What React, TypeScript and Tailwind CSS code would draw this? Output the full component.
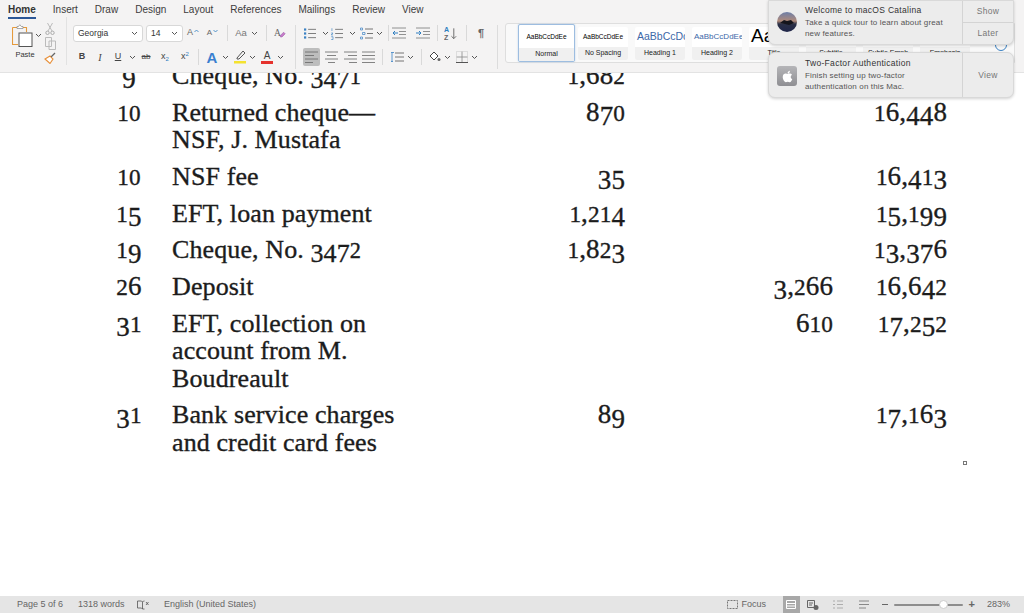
import React from "react";
import { FaApple } from "react-icons/fa";

const Chev = ({ c = "#555" }: { c?: string }) => (
  <svg width="7" height="5" viewBox="0 0 7 5"><path d="M1 1l2.5 2.5L6 1" fill="none" stroke={c} strokeWidth="1" /></svg>
);
const Caret = ({ up }: { up?: boolean }) => (
  <svg className="mb-[5px] ml-[1px]" width="5" height="4" viewBox="0 0 5 4"><path d={up ? "M.5 3L2.500 1l2 2" : "M.5 1l2 2 2-2"} fill="none" stroke="#2f7fc1" strokeWidth=".8" /></svg>
);
const Lines = ({ kind }: { kind: "l" | "c" | "r" | "j" }) => {
  const d = {
    l: "M0 1h13M0 4.5h9M0 8h13M0 11.5h8",
    c: "M0 1h13M2 4.5h9M0 8h13M3 11.5h7",
    r: "M0 1h13M4 4.5h9M0 8h13M5 11.5h8",
    j: "M0 1h13M0 4.5h13M0 8h13M0 11.5h13",
  }[kind];
  return <svg width="13" height="12" viewBox="0 0 13 12"><path d={d} fill="none" stroke="#666" strokeWidth="0.8" /></svg>;
};
const ListIcon = ({ kind }: { kind: "b" | "n" | "m" }) => (
  <svg width="13" height="13" viewBox="0 0 13 13">
    <path d={kind === "m" ? "M5 2h8M7 6.5h6M5 11h8" : "M4.5 2h8.5M4.5 6.5h8.5M4.5 11h8.5"} fill="none" stroke="#666" strokeWidth=".9" />
    {kind === "b" && <g fill="#3b82c4"><rect x="0" y="1" width="2.4" height="2.4" /><rect x="0" y="5.3" width="2.4" height="2.4" /><rect x="0" y="9.6" width="2.4" height="2.4" /></g>}
    {kind === "n" && <path d="M1 .8v3M.2 6h2l-2 2h2M.2 10h2v3h-2" fill="none" stroke="#3b82c4" strokeWidth=".7" />}
    {kind === "m" && <path d="M.5 1h2v2h-2zM2.500 5.500h2.500v2H2.500zM.5 10h2v2h-2z" fill="none" stroke="#3b82c4" strokeWidth=".7" />}
  </svg>
);
const Indent = ({ dir }: { dir: "l" | "r" }) => (
  <svg width="14" height="12" viewBox="0 0 14 12">
    <path d="M0 1h14M7 4.500h7M7 7.500h7M0 11h14" fill="none" stroke="#777" strokeWidth=".8" />
    <path d={dir === "l" ? "M6 6H1M3 4L1 6l2 2" : "M0 6h5M3 4l2 2-2 2"} fill="none" stroke="#2f7fc1" strokeWidth="1" />
  </svg>
);
const Sep = ({ h = "h-[16px]" }: { h?: string }) => <div className={`w-px bg-[#d9d9d9] ${h}`} />;

const Old = ({ s }: { s: string }) => (
  <>
    {s.split("").map((c, i) =>
      "012".includes(c) ? (
        <span key={i} className="text-[0.86em] leading-none">{c}</span>
      ) : "34579".includes(c) ? (
        <span key={i} className="relative top-[0.15em]">{c}</span>
      ) : (
        <span key={i}>{c}</span>
      )
    )}
  </>
);

const Doc = [
  { d: "9", t: ["Cheque, No. 3471"], a: "1,682", b: "", c: "" },
  { d: "10", t: ["Returned cheque—", "NSF, J. Mustafa"], a: "870", b: "", c: "16,448" },
  { d: "10", t: ["NSF fee"], a: "35", b: "", c: "16,413" },
  { d: "15", t: ["EFT, loan payment"], a: "1,214", b: "", c: "15,199" },
  { d: "19", t: ["Cheque, No. 3472"], a: "1,823", b: "", c: "13,376" },
  { d: "26", t: ["Deposit"], a: "", b: "3,266", c: "16,642" },
  { d: "31", t: ["EFT, collection on", "account from M.", "Boudreault"], a: "", b: "610", c: "17,252" },
  { d: "31", t: ["Bank service charges", "and credit card fees"], a: "89", b: "", c: "17,163" },
];

const StyleCard = ({ sample, label, cls, active }: { sample: string; label: string; cls: string; active?: boolean }) => (
  <div className={`flex shrink-0 flex-col overflow-hidden rounded-[2px] bg-white ${active ? "-mr-[4px] h-[38px] w-[57px] border border-[#9dbde0] shadow-[0_0_2px_#bcd2ea]" : "h-[33px] w-[50px]"}`}>
    <div className={`flex min-w-0 flex-1 items-center justify-center overflow-hidden whitespace-nowrap ${cls}`}>{sample}</div>
    <div className="flex h-[13px] shrink-0 items-center justify-center bg-[#f0f0f0] text-[7px] text-[#222]">{label}</div>
  </div>
);

export default function App() {
  return (
    <div className="relative flex h-[613px] w-[1024px] flex-col overflow-hidden bg-white font-['Liberation_Sans',sans-serif] text-[#3c3c3c]">
      {/* Ribbon */}
      <div className="relative z-10 h-[72px] shrink-0 bg-[#f4f3f3] shadow-[0_1px_0_#e3e3e3]">
        <div className="flex h-[20px] items-center gap-[17px] pl-[8px] text-[10px] leading-none">
          <div className="relative font-bold text-[#333]">Home<div className="absolute -bottom-[4px] left-0 h-[2px] w-full bg-[#2b5797]" /></div>
          <span>Insert</span><span>Draw</span><span>Design</span><span>Layout</span><span>References</span><span>Mailings</span><span>Review</span><span>View</span>
        </div>
        <div className="flex h-[52px]">
          {/* Clipboard */}
          <div className="flex w-[66px] shrink-0 pl-[12px]">
            <div className="flex w-[30px] flex-col">
              <div className="mt-[4px] flex items-center">
                <svg width="21" height="23" viewBox="0 0 21 23">
                  <path d="M.5 3.500h4.500M11 3.500h3.500V8M.5 3.500V20.500H6" fill="none" stroke="#e59a3c" strokeWidth="1.1" />
                  <path d="M5 4.500V2.500h1.500L7.800.7 9.300 2.500H11v2z" fill="#fff" stroke="#888" strokeWidth=".7" />
                  <rect x="7" y="9" width="13" height="13.500" fill="#fff" stroke="#555" strokeWidth="1" />
                </svg>
                <span className="ml-[2px]"><Chev /></span>
              </div>
              <div className="mt-[3px] w-[26px] text-center text-[7.500px] leading-[10px] text-[#333]">Paste</div>
            </div>
            <div className="flex w-[16px] flex-col items-center gap-[2px] pt-[3px]">
              <svg width="10" height="12" viewBox="0 0 10 12"><path d="M2.500 0L7 8M7.500 0L3 8" stroke="#bbb" fill="none" /><circle cx="2.500" cy="9.800" r="1.700" fill="none" stroke="#aaa" /><circle cx="7.500" cy="9.800" r="1.700" fill="none" stroke="#aaa" /></svg>
              <svg width="11" height="13" viewBox="0 0 11 13"><path d="M.500.500h6v9h-6zM4 4h6.500v8.500H4z" fill="none" stroke="#bbb" /></svg>
              <svg width="12" height="12" viewBox="0 0 12 12"><path d="M1 7l5-3 3 3-3 4.500z" fill="#fff" stroke="#e8903a" strokeWidth="1.100" /><path d="M7 5l4-4" stroke="#666" strokeWidth="1.300" /></svg>
            </div>
          </div>
          <div className="-mt-[3px] mb-[7px] w-px bg-[#e2e2e2]" />
          {/* Font etc. */}
          <div className="flex w-[438px] shrink-0 flex-col pl-[6px]">
            <div className="mt-[4px] flex h-[18px] items-center">
              <div className="flex h-[17px] w-[70px] items-center justify-between rounded-[3px] border border-[#d8d8d8] bg-white pl-[4px] pr-[4px] text-[8.500px] text-[#333]">Georgia<Chev /></div>
              <div className="ml-[3px] flex h-[17px] w-[37px] items-center justify-between rounded-[3px] border border-[#d8d8d8] bg-white pl-[4px] pr-[4px] text-[8.500px] text-[#333]">14<Chev /></div>
              <div className="flex w-[20px] items-center justify-center text-[9px] text-[#666]">A<Caret up /></div>
              <div className="flex w-[19px] items-center justify-center text-[8px] text-[#666]">A<Caret /></div>
              <div className="flex w-[10px] justify-center"><Sep /></div>
              <div className="w-[18px] text-center text-[9.500px] text-[#777]">Aa</div>
              <div className="flex w-[8px] justify-center"><Chev /></div>
              <div className="flex w-[16px] justify-center"><Sep /></div>
              <div className="flex w-[12px] justify-center">
                <svg width="15" height="14" viewBox="0 0 15 14"><text x="0" y="11" fontSize="12" fill="#666" fontFamily="Liberation Serif">A</text><path d="M8 10l4-4 2 2-4 4H8z" fill="#c77ac9" stroke="#8e4f9c" strokeWidth=".6" /></svg>
              </div>
              <div className="flex w-[18px] justify-center"><div className="h-[44px] w-px translate-y-[14px] bg-[#dcdcdc]" /></div>
              <div className="flex w-[12px] justify-center"><ListIcon kind="b" /></div>
              <div className="ml-[4px] flex w-[10px] justify-center"><Chev /></div>
              <div className="ml-[1px] flex w-[12px] justify-center"><ListIcon kind="n" /></div>
              <div className="ml-[4px] flex w-[10px] justify-center"><Chev /></div>
              <div className="ml-[2px] flex w-[14px] justify-center"><ListIcon kind="m" /></div>
              <div className="flex w-[12px] justify-center"><Chev /></div>
              <div className="flex w-[7px] justify-center"><Sep /></div>
              <div className="flex w-[14px] justify-center"><Indent dir="l" /></div>
              <div className="ml-[10px] flex w-[14px] justify-center"><Indent dir="r" /></div>
              <div className="flex w-[14px] justify-center"><Sep /></div>
              <div className="flex w-[14px] justify-center">
                <svg width="15" height="16" viewBox="0 0 15 16"><text x="0" y="7" fontSize="7.500" fill="#2f7fc1" fontWeight="bold">A</text><text x="0" y="15" fontSize="7.500" fill="#666" fontWeight="bold">Z</text><path d="M10.500 3v11M8 11.500l2.500 2.500 2.500-2.500" fill="none" stroke="#666" /></svg>
              </div>
              <div className="flex w-[16px] justify-center"><Sep /></div>
              <div className="w-[14px] text-center text-[11px] font-bold text-[#666]">¶</div>
              <div className="flex w-[10px] justify-end"><div className="h-[44px] w-px translate-y-[14px] bg-[#dcdcdc]" /></div>
            </div>
            <div className="mt-[6px] flex h-[18px] items-center text-[#444]">
              <div className="ml-[3px] w-[12px] text-center text-[9px] font-bold">B</div>
              <div className="ml-[6px] w-[12px] text-center font-['Liberation_Serif',serif] text-[10px] italic">I</div>
              <div className="ml-[6px] w-[12px] text-center text-[9px] underline">U</div>
              <div className="ml-[4px] flex w-[8px] justify-center"><Chev /></div>
              <div className="ml-[2px] w-[16px] text-center text-[8px] line-through">ab</div>
              <div className="ml-[4px] w-[14px] text-center text-[9px]">x<sub className="text-[6px] text-[#2f7fc1]">2</sub></div>
              <div className="ml-[6px] w-[14px] text-center text-[9px]">x<sup className="text-[6px] text-[#2f7fc1]">2</sup></div>
              <div className="flex w-[12px] justify-center"><Sep /></div>
              <div className="ml-[1px] w-[14px] text-center text-[15px] font-bold leading-none text-[#3a7fd0]">A</div>
              <div className="ml-[1px] flex w-[10px] justify-center"><Chev /></div>
              <div className="ml-[4px] flex w-[12px] justify-center">
                <svg width="12" height="14" viewBox="0 0 12 14"><path d="M3 8L9 1l2 2-6 6H3z" fill="none" stroke="#555" /><rect y="11" width="12" height="2.500" fill="#f4e22f" /></svg>
              </div>
              <div className="flex w-[12px] justify-center"><Chev /></div>
              <div className="ml-[2px] flex w-[14px] flex-col items-center text-[10px] leading-[11px]">A<div className="h-[2.500px] w-[12px] bg-[#e5322d]" /></div>
              <div className="flex w-[12px] justify-center"><Chev /></div>
              <div className="ml-[17px] flex h-[18px] w-[17px] items-center justify-center rounded-[2px] bg-[#bdbdbd]"><Lines kind="l" /></div>
              <div className="ml-[1px] flex w-[20px] justify-center"><Lines kind="c" /></div>
              <div className="flex w-[18px] justify-center"><Lines kind="r" /></div>
              <div className="flex w-[18px] justify-center"><Lines kind="j" /></div>
              <div className="flex w-[10px] justify-center"><Sep /></div>
              <div className="ml-[1px] flex w-[18px] justify-center">
                <svg width="14" height="13" viewBox="0 0 14 13"><path d="M1 1.500h3M2 1.500v9M1 10.500h2" fill="none" stroke="#3b82c4" strokeWidth=".8" /><path d="M5 2h9M5 6h9M5 10h9" stroke="#666" strokeWidth=".9" /></svg>
              </div>
              <div className="flex w-[8px] justify-center"><Chev /></div>
              <div className="flex w-[14px] justify-center"><Sep /></div>
              <div className="flex w-[14px] justify-center">
                <svg width="12" height="12" viewBox="0 0 12 12"><path d="M5 1L1 5l4 4 4-4z" fill="#fff" stroke="#444" /><circle cx="10" cy="8.500" r="1.500" fill="#666" /></svg>
              </div>
              <div className="flex w-[10px] justify-center"><Chev /></div>
              <div className="ml-[2px] flex w-[15px] justify-center">
                <svg width="12" height="12" viewBox="0 0 12 12"><path d="M.500 6h11M6 .500v11" stroke="#888" strokeWidth=".8" /><path d="M.500.500h11v11H.500z" fill="none" stroke="#bbb" strokeWidth=".8" strokeDasharray="1 1" /><path d="M0 11.500h12" stroke="#555" /></svg>
              </div>
              <div className="flex w-[11px] justify-center"><Chev /></div>
            </div>
          </div>
          {/* Gallery */}
          <div className="mt-[3px] flex h-[40px] w-[510px] shrink-0 items-center gap-[7px] rounded-l-[3px] border border-[#dedede] bg-[#f9f9f9] pl-[12px]">
            <StyleCard active sample="AaBbCcDdEe" label="Normal" cls="text-[6.500px] text-black" />
            <StyleCard sample="AaBbCcDdEe" label="No Spacing" cls="text-[6.500px] text-black" />
            <StyleCard sample="AaBbCcDc" label="Heading 1" cls="justify-start pl-[2px] text-[10.500px] text-[#3d68a8]" />
            <StyleCard sample="AaBbCcDdEe" label="Heading 2" cls="justify-start pl-[2px] text-[8px] text-[#3d68a8]" />
            <StyleCard sample="Aa" label="Title" cls="justify-start pl-[2px] text-[19px] text-black" />
            <StyleCard sample="AaBb" label="Subtitle" cls="text-[8px] text-[#555]" />
            <StyleCard sample="AaBb" label="Subtle Emph" cls="text-[8px] text-[#555]" />
            <StyleCard sample="AaBb" label="Emphasis" cls="text-[8px] text-[#555]" />
            <div className="ml-[14px] flex flex-col items-center">
              <div className="mt-[12px] h-[12px] w-[12px] rounded-full border border-[#3b82c4]" />
              <div className="text-[7px] leading-[9px] text-[#333]">Styles</div>
            </div>
          </div>
        </div>
      </div>

      {/* Document */}
      <main className="min-h-0 flex-1 overflow-hidden pl-[110px] font-['Liberation_Serif',serif] text-[26px] leading-[27.300px] tracking-[0.1px] text-[#1c1c1c] [-webkit-text-stroke:0.35px_#1c1c1c]">
        <div className="-mt-[10px] flex flex-col gap-[9.500px]">
          {Doc.map((r, i) => (
            <div key={i} className="grid grid-cols-[38px_24px_250px_203px_208px_114px]">
              <div className="text-center text-[27px]"><Old s={r.d} /></div>
              <div />
              <div className="whitespace-nowrap">{r.t.map((l) => <div key={l}><Old s={l} /></div>)}</div>
              <div className="text-right text-[27px]"><Old s={r.a} /></div>
              <div className="text-right text-[27px]"><Old s={r.b} /></div>
              <div className="text-right text-[27px]"><Old s={r.c} /></div>
            </div>
          ))}
        </div>
      </main>

      {/* Status bar */}
      <footer className="z-10 flex h-[17px] shrink-0 items-center bg-[#e5e5e5] pl-[17px] text-[9px] text-[#666]">
        <span className="w-[61px]">Page 5 of 6</span>
        <span className="w-[59px]">1318 words</span>
        <svg width="12" height="10" viewBox="0 0 12 10"><path d="M.500 1h4l1 1v7l-1-1h-4zM5.500 2l1-1h1M5.500 9h2M9 2l2.500 3M11.500 2L9 5" fill="none" stroke="#555" strokeWidth=".8" /></svg>
        <span className="ml-[15px] whitespace-nowrap">English (United States)</span>
        <div className="ml-auto flex h-full items-center">
          <svg width="11" height="9" viewBox="0 0 11 9"><path d="M.500.500h10v8H.500z" fill="none" stroke="#777" strokeDasharray="2 1" /></svg>
          <span className="ml-[4px] w-[41px]">Focus</span>
          <div className="flex h-full w-[17px] items-center justify-center bg-[#a8a8a8]">
            <svg width="10" height="9" viewBox="0 0 10 9"><path d="M.500.500h9v8h-9zM.500 3.500h9M.500 6h9" fill="none" stroke="#fff" /></svg>
          </div>
          <div className="ml-[7px] flex w-[12px] justify-center">
            <svg width="12" height="10" viewBox="0 0 12 10"><path d="M.500.500h7v7h-7zM2 3h4M2 5h3" fill="none" stroke="#666" /><circle cx="9" cy="7.500" r="2.500" fill="#666" /></svg>
          </div>
          <div className="ml-[14px] flex w-[10px] justify-center opacity-60">
            <svg width="10" height="9" viewBox="0 0 10 9"><path d="M0 1h2M4 1h6M0 4.500h2M4 4.500h6M0 8h2M4 8h6" stroke="#888" /></svg>
          </div>
          <div className="ml-[16px] flex w-[10px] justify-center">
            <svg width="10" height="9" viewBox="0 0 10 9"><path d="M0 1h10M0 4.500h10M0 8h7" stroke="#888" /></svg>
          </div>
          <div className="ml-[13px] h-[1.500px] w-[6px] bg-[#666]" />
          <div className="relative ml-[6px] h-[2px] w-[69px] rounded bg-[#8d8d8d]">
            <div className="absolute -top-[3.500px] left-[45px] h-[9px] w-[9px] rounded-full border border-[#ccc] bg-white" />
          </div>
          <span className="ml-[6px] text-[11px] font-bold leading-none text-[#666]">+</span>
          <span className="ml-[12px] w-[37px]">283%</span>
        </div>
      </footer>

      {/* Text box handle */}
      <div className="absolute left-[963px] top-[461px] h-[4px] w-[4px] border border-[#777] bg-white" />

      {/* Notifications */}
      <div className="absolute left-[768px] top-0 z-20 flex h-[45px] w-[246px] rounded-b-[7px] border border-[#d9d9d9] bg-[#ececec] shadow-[0_1px_3px_rgba(0,0,0,0.18)]">
        <div className="flex flex-1 items-start">
          <svg className="ml-[8px] mt-[11px] shrink-0" width="20" height="20" viewBox="0 0 20 20">
            <defs><linearGradient id="cat" x1="0" y1="0" x2="0" y2="1"><stop offset="0" stopColor="#6d7fa8" /><stop offset=".45" stopColor="#b08a7a" /><stop offset=".6" stopColor="#2a2f45" /><stop offset="1" stopColor="#20264a" /></linearGradient></defs>
            <circle cx="10" cy="10" r="10" fill="url(#cat)" />
            <path d="M3 11l4-3 3 1 4-1 3 3-5 2-4-1z" fill="#15151c" />
          </svg>
          <div className="ml-[8px] pt-[3px] text-[8px] leading-[11px] tracking-[0.15px] text-[#555]">
            <div className="text-[8.500px] leading-[12px] tracking-[0.3px] text-[#333]">Welcome to macOS Catalina</div>
            <div className="mt-[1px] whitespace-nowrap">Take a quick tour to learn about great</div>
            <div>new features.</div>
          </div>
        </div>
        <div className="flex w-[51px] flex-col border-l border-[#d4d4d4] text-[8.500px] tracking-[0.3px] text-[#777]">
          <div className="flex h-[22px] items-center justify-center border-b border-[#d4d4d4]">Show</div>
          <div className="flex flex-1 items-center justify-center">Later</div>
        </div>
      </div>
      <div className="absolute left-[768px] top-[52px] z-20 flex h-[46px] w-[246px] rounded-[7px] border border-[#d9d9d9] bg-[#ececec] shadow-[0_1px_3px_rgba(0,0,0,0.18)]">
        <div className="flex flex-1 items-start">
          <div className="ml-[8px] mt-[13px] flex h-[20px] w-[20px] shrink-0 items-center justify-center rounded-[3px] bg-gradient-to-b from-[#b5b5b8] to-[#8f8f93] text-[13px] text-white"><FaApple /></div>
          <div className="ml-[8px] pt-[4px] text-[8px] leading-[11px] tracking-[0.15px] text-[#555]">
            <div className="text-[8.500px] leading-[12px] tracking-[0.3px] text-[#333]">Two-Factor Authentication</div>
            <div className="mt-[1px] whitespace-nowrap">Finish setting up two-factor</div>
            <div>authentication on this Mac.</div>
          </div>
        </div>
        <div className="flex w-[51px] items-center justify-center border-l border-[#d4d4d4] text-[8.500px] tracking-[0.3px] text-[#777]">View</div>
      </div>
    </div>
  );
}
